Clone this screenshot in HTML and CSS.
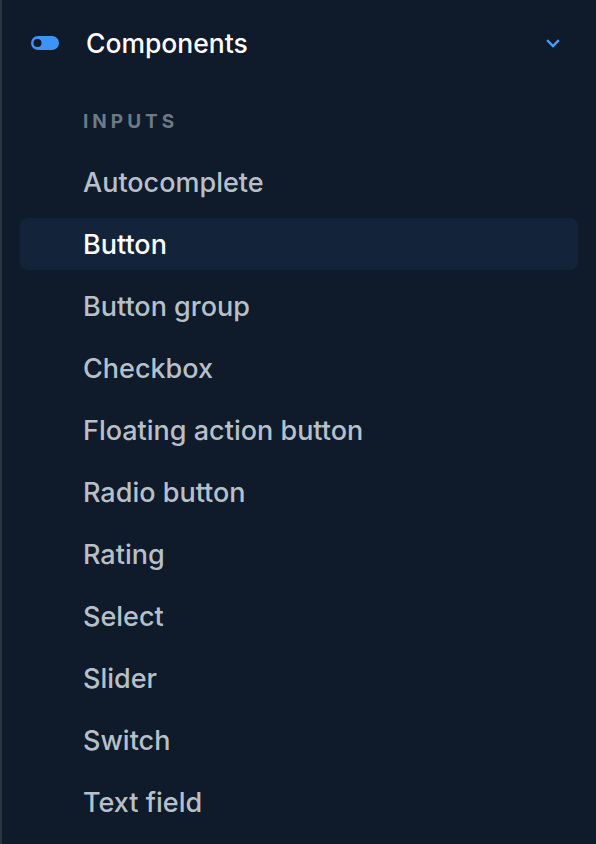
FILE: index.html
```html
<!DOCTYPE html>
<html lang="en">
<head>
<meta charset="utf-8">
<title>Components nav</title>
<link rel="stylesheet" href="styles.css">
</head>
<body>
<nav class="nav">
  <div class="group-header">
    <svg class="group-icon" width="28" height="14" viewBox="0 0 28 14" aria-hidden="true">
      <rect x="0" y="0" width="28" height="14" rx="7" fill="#3d94f6"/>
      <circle cx="6.5" cy="7" r="4" fill="#0f1a2a"/>
    </svg>
    <span class="group-title">Components</span>
    <svg class="chevron" width="14" height="9" viewBox="0 0 14 9" aria-hidden="true">
      <path d="M2 2 L7 7 L12 2" fill="none" stroke="#4a9df8" stroke-width="2.4" stroke-linecap="square"/>
    </svg>
  </div>
  <div class="section-title">Inputs</div>
  <ul class="items">
    <li class="item">Autocomplete</li>
    <li class="item active">Button</li>
    <li class="item">Button group</li>
    <li class="item">Checkbox</li>
    <li class="item">Floating action button</li>
    <li class="item">Radio button</li>
    <li class="item">Rating</li>
    <li class="item">Select</li>
    <li class="item">Slider</li>
    <li class="item">Switch</li>
    <li class="item">Text field</li>
  </ul>
</nav>
</body>
</html>
```
FILE: styles.css
```css
html, body {
  margin: 0;
  padding: 0;
  background: #0f1a2a;
}
body {
  font-family: Inter, "Open Sans", sans-serif;
  height: 844px;
  overflow: hidden;
}
.nav {
  border-left: 2px solid #2b3541;
  height: 844px;
  box-sizing: border-box;
}
.group-header {
  height: 86px;
  display: flex;
  align-items: center;
  padding-left: 29px;
  padding-right: 36px;
}
.group-icon {
  flex: none;
  display: block;
}
.group-title {
  margin-left: 27px;
  flex: 1;
  color: #ffffff;
  font-size: 26.5px;
  font-weight: 500;
  line-height: 1;
}
.chevron {
  flex: none;
  display: block;
}
.section-title {
  height: 70px;
  display: flex;
  align-items: center;
  padding-left: 81px;
  color: #6c7a88;
  font-size: 19px;
  font-weight: 700;
  letter-spacing: 4px;
  text-transform: uppercase;
}
.items {
  list-style: none;
  margin: 0;
  padding: 0 18px 0 18px;
  display: flex;
  flex-direction: column;
  gap: 10px;
}
.item {
  height: 52px;
  display: flex;
  align-items: center;
  padding-left: 63px;
  border-radius: 8px;
  color: #b7c0c9;
  font-size: 27px;
  font-weight: 500;
  line-height: 1;
}
.item.active {
  background: #13233a;
  color: #ffffff;
}
```
